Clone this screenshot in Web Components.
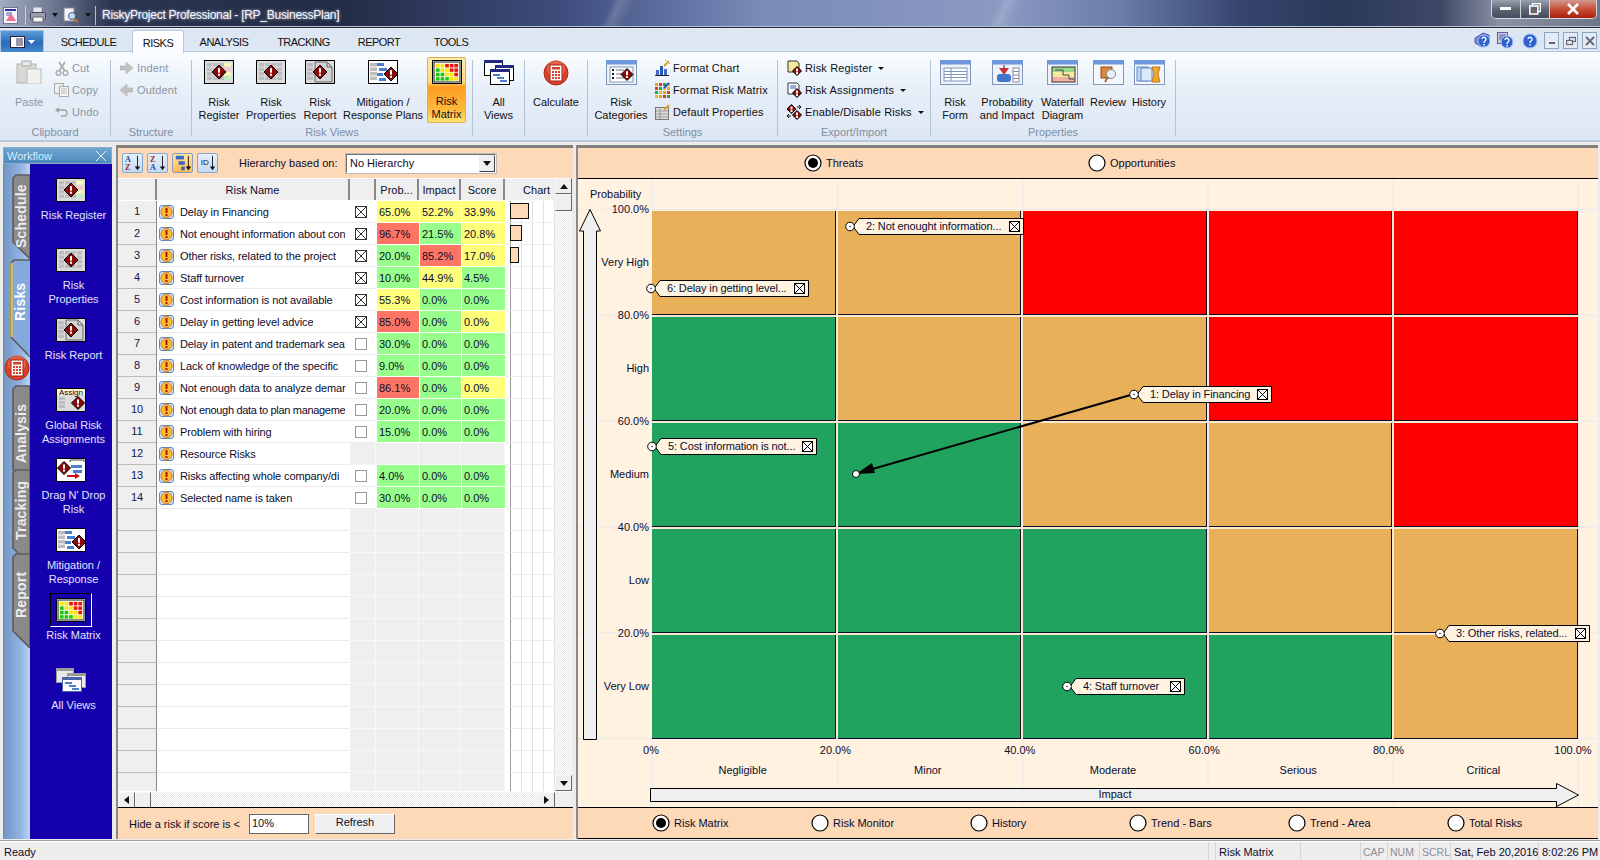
<!DOCTYPE html>
<html lang="en">
<head>
<meta charset="utf-8">
<title>RiskyProject Professional</title>
<style>
html,body{margin:0;height:100%;overflow:hidden;font:11px "Liberation Sans",Arial,sans-serif;color:#0c0c2c;background:#f0eded}
</style>
</head>
<body>
<rp-app></rp-app>
<script>
// Small helpers for the icon drawings
const dia=(x,y,r=7)=>`<path d="M${x} ${y-r}L${x+r} ${y}L${x} ${y+r}L${x-r} ${y}Z" fill="#8c0a0a" stroke="#000"/><rect x="${x-1}" y="${y-r*.55}" width="2" height="${r*.65}" fill="#fff"/><rect x="${x-1}" y="${y+r*.25}" width="2" height="2" fill="#fff"/>`;
const cells=(x,y,cols,rows,cw,ch,fill="#bdbdbd",gap=1)=>{
  let s="";
  for(let r=0;r<rows;r++)for(let c=0;c<cols;c++){
    const f=typeof fill==="function"?fill(r,c):fill;
    s+=`<rect x="${x+c*(cw+gap)}" y="${y+r*(ch+gap)}" width="${cw}" height="${ch}" fill="${f}"/>`;
  }
  return s;
};
const frame=(fill="#dcdcdc")=>`<rect x=".5" y=".5" width="29" height="23" fill="${fill}" stroke="#000"/>`;
const win=(inner="",fill="#fff")=>`<rect x=".5" y=".5" width="30" height="24" fill="${fill}" stroke="#7f96b8"/><rect x="0" y="0" width="31" height="4.5" fill="#6f97dc"/>${inner}`;
const matColor=(r,c)=>{const m=["yyrrr","gyyrr","ggyyr","gggyy"];return {y:"#f6e800",r:"#ee1010",g:"#14c814"}[m[r][c]];};
const help=(x,y)=>`<circle cx="${x}" cy="${y}" r="6" fill="#2e62d0" stroke="#9cc0f4"/><path d="M${x-2} ${y-2}a2 2 0 1 1 3 2q-1 .7-1 2" fill="none" stroke="#fff" stroke-width="1.4"/><rect x="${x-.7}" y="${y+3}" width="1.5" height="1.5" fill="#fff"/>`;
const ICONS={
  register:[30,24,frame()+cells(3,3,3,4,5,3.5)+cells(20,3,1,4,7,3.5,(r)=>["#f7f7c0","#f5c8c8","#f7f7c0","#c0eec0"][r])+dia(15,12)],
  properties:[30,24,frame()+cells(3,3,4,4,5,3.5)+dia(15,12)],
  report:[30,24,frame()+cells(2,3,1,4,6,3.5)+`<path d="M10 2h12l5 5v15H10z" fill="#d4d4d4" stroke="#666"/><path d="M22 2v5h5" fill="none" stroke="#666"/>`+dia(15,12)],
  mitigation:[30,24,frame("#fff")+cells(2,3,1,4,7,3.5)+`<rect x="9" y="3" width="7" height="3" fill="#4a7ed0"/><rect x="11" y="8" width="8" height="3" fill="#4a7ed0"/><rect x="9" y="13" width="6" height="3" fill="#4a7ed0"/><rect x="11" y="18" width="7" height="3" fill="#4a7ed0"/>`+dia(23,14)],
  matrix:[30,24,frame("#fff")+`<rect x="2" y="2" width="26" height="20" fill="#f7f2dc" stroke="#222"/>`+cells(4,4,5,4,3.6,3.4,matColor,1)],
  global:[30,24,frame("#dcdcdc")+`<rect x="1" y="1" width="28" height="6" fill="#fff6dc"/><text x="15" y="7" font-size="8" font-family="Liberation Sans" text-anchor="middle" fill="#000">Assign</text>`+cells(3,9,1,3,6,3)+dia(22,15,6.5)],
  dragdrop:[30,24,frame("#fff")+dia(8,10,6.5)+`<rect x="15" y="7" width="11" height="3" fill="#4a7ed0"/><rect x="17" y="12" width="9" height="3" fill="#4a7ed0"/><path d="M14 2h14M14 4V2M28 4V2" stroke="#444" fill="none"/><path d="M11 18h9" stroke="#d01010" stroke-width="2"/><path d="M19 15l5 3-5 3z" fill="#d01010"/>`],
  allviews:[30,26,`<rect x=".5" y=".5" width="18" height="15" fill="#fff" stroke="#000"/><rect x="0" y="0" width="19" height="3" fill="#222a80"/>`+`<rect x="11.5" y="5.5" width="18" height="15" fill="#fff" stroke="#000"/><rect x="11" y="5" width="19" height="3" fill="#222a80"/>`+`<rect x="6.5" y="9.5" width="19" height="15" fill="#fff" stroke="#000"/><rect x="6" y="9" width="20" height="3" fill="#222a80"/><rect x="9" y="14" width="7" height="2" fill="#4a7ed0"/><rect x="13" y="17" width="7" height="2" fill="#4a7ed0"/><rect x="16" y="20" width="7" height="2" fill="#4a7ed0"/>`],
  allviewsw:[30,24,`<rect x=".5" y=".5" width="17" height="14" fill="#e8e8e8" stroke="#999"/><rect x="0" y="0" width="18" height="3" fill="#9a9a9a"/><rect x="11.5" y="5.5" width="18" height="14" fill="#eee" stroke="#999"/><rect x="11" y="5" width="19" height="3" fill="#9a9a9a"/><rect x="6.5" y="9.5" width="19" height="14" fill="#fff" stroke="#4a66aa"/><rect x="6" y="9" width="20" height="3" fill="#4a66aa"/><rect x="9" y="14" width="7" height="2" fill="#4a7ed0"/><rect x="13" y="17" width="7" height="2" fill="#4a7ed0"/><rect x="16" y="20" width="7" height="2" fill="#4a7ed0"/>`],
  paste:[26,24,`<rect x="1" y="4" width="19" height="19" fill="#d8d8d4" stroke="#b4b4b0"/><rect x="6" y="1" width="9" height="5" fill="#e6e6e2" stroke="#aaa"/><rect x="11" y="9" width="14" height="15" fill="#f0f0ee" stroke="#bcbcbc"/>`],
  cut:[14,15,`<path d="M4 1l6 9M10 1L4 10" stroke="#a6a6a6" stroke-width="1.6" fill="none"/><circle cx="3.5" cy="12" r="2.4" fill="none" stroke="#a6a6a6" stroke-width="1.4"/><circle cx="10.5" cy="12" r="2.4" fill="none" stroke="#a6a6a6" stroke-width="1.4"/>`],
  copy:[15,14,`<rect x=".5" y=".5" width="9" height="10" fill="#eee" stroke="#aaa"/><rect x="5.5" y="3.5" width="9" height="10" fill="#f4f4f4" stroke="#aaa"/><path d="M7 6h6M7 8h6M7 10h6" stroke="#bbb"/>`],
  undo:[13,10,`<path d="M3 3h6a3 3 0 0 1 0 6H6" fill="none" stroke="#a0a0a0" stroke-width="1.3"/><path d="M4 0L0 3l4 3z" fill="#a0a0a0"/>`],
  indent:[13,12,`<path d="M0 4h6V0l7 6-7 6V8H0z" fill="#c2c2c2" stroke="#aaa" stroke-width=".5"/>`],
  outdent:[13,12,`<path d="M13 4H7V0L0 6l7 6V8h6z" fill="#c2c2c2" stroke="#aaa" stroke-width=".5"/>`],
  calc:[26,26,`<circle cx="13" cy="13" r="12" fill="#d8402a" stroke="#b02818"/><circle cx="13" cy="9" r="9" fill="#ee7a60" opacity=".55"/><rect x="7" y="5" width="12" height="16" fill="#fff" stroke="#a02010"/><rect x="9" y="7" width="8" height="2.5" fill="#d8402a"/>`+cells(9,11,3,3,2,2,"#d8402a")],
  fmtchart:[15,16,`<rect x="1" y="10" width="3" height="6" fill="#3a6cc8"/><rect x="5" y="6" width="3" height="10" fill="#2a56b0"/><rect x="9" y="9" width="3" height="7" fill="#3a6cc8"/><rect x="0" y="15" width="14" height="1" fill="#223"/><path d="M9 6l5-5" stroke="#e0a020" stroke-width="2"/><path d="M10 0l1 1M14 3l1 1" stroke="#888"/>`],
  fmtmatrix:[15,16,cells(0,1,4,4,3,3,(r,c)=>["#e8a020","#d04020","#30a040","#e0c020"][(r+c)%4])+`<path d="M9 6l5-5" stroke="#2a56b0" stroke-width="2"/>`],
  defprops:[15,16,`<rect x=".5" y="3.5" width="13" height="12" fill="#ddd" stroke="#777"/><path d="M1 7h12M1 10h12M1 13h12M5 4v11" stroke="#999"/><path d="M9 6l5-5" stroke="#e0a020" stroke-width="2"/>`],
  regsmall:[15,16,`<path d="M1 1h9l2 2v9H1z" fill="#f6e89a" stroke="#333"/>`+dia(10,11,4.5)],
  assignsmall:[15,16,`<path d="M1 1h9l2 2v9H1z" fill="#fff" stroke="#333"/><path d="M3 4h6M3 6h6" stroke="#2a56b0"/>`+dia(10,11,4.5)],
  enablesmall:[15,16,dia(4.5,5,4.5)+dia(10,11,4.5)+`<path d="M10 3h4M12 1l2 2-2 2M0 12h4M2 10l-2 2 2 2" stroke="#111" fill="none"/>`],
  categories:[31,25,win(`<rect x="4" y="7" width="23" height="15" fill="#fff" stroke="#7f96b8"/>`+cells(6,9,1,3,2,2,"#222",2)+`<path d="M10 10h8M10 14h8M10 18h8" stroke="#777"/>`+dia(21,14.5,6),"#eef3fb")],
  form:[31,25,win(`<rect x="4" y="8" width="23" height="13" fill="#fff" stroke="#7f96b8"/><path d="M4 11.5h23M4 14.5h23M4 17.5h23M11 8v13" stroke="#7f96b8"/>`,"#eef3fb")],
  prob:[31,25,win(`<path d="M7 8h10l-5 7z" fill="#d03030"/><path d="M12 5v4" stroke="#333"/><rect x="5" y="14" width="14" height="8" rx="3" fill="#3f78c8"/><rect x="21" y="8" width="6" height="14" fill="#fff" stroke="#889"/><path d="M21 11.5h6M21 15h6M21 18.5h6" stroke="#889"/>`,"#eef3fb")],
  waterfall:[31,25,win(`<rect x="5" y="7" width="23" height="5" fill="#9ad88a"/><rect x="5" y="12" width="23" height="5" fill="#f6eaa0"/><rect x="5" y="17" width="23" height="5" fill="#f4b0a8"/><path d="M8 10h8v5h6v4h5" fill="none" stroke="#444"/><rect x="5" y="7" width="23" height="15" fill="none" stroke="#333"/>`,"#eef3fb")],
  review:[31,25,win(`<rect x="8" y="7" width="11" height="11" fill="#d88a3a" stroke="#8a5020"/><circle cx="18" cy="14" r="4.5" fill="#e8f0fa" stroke="#888"/><path d="M15 17l-3 5" stroke="#a87030" stroke-width="2"/>`,"#f4f7fc")],
  history:[31,25,win(`<rect x="3" y="7" width="11" height="14" fill="#bcd6f6" stroke="#5a88c8"/><rect x="7" y="8" width="11" height="13" fill="#dce9fa" stroke="#5a88c8"/><path d="M18 7h8l-2 7 2 8h-8l2-8z" fill="#f0a830" stroke="#c07a10"/>`,"#f4f7fc")],
  risk:[15,14,`<rect x=".5" y=".5" width="14" height="13" rx="2.5" fill="#cfe0f5" stroke="#5f84c4"/><circle cx="7.5" cy="7" r="5.6" fill="#f8c030" stroke="#e07810"/><rect x="6.5" y="3" width="2" height="5" fill="#b01010"/><rect x="6.5" y="9" width="2" height="2" fill="#b01010"/>`],
  helpbook:[16,17,`<path d="M1 6l8-5 6 2v8l-7 4-7-4z" fill="#8a80d8" stroke="#6058b0"/>`+help(10,9)],
  helpdoc:[16,17,`<rect x=".5" y=".5" width="10" height="11" fill="#ccd" stroke="#6058b0"/><path d="M2 3h7M2 5h7M2 7h5" stroke="#6058b0"/>`+help(10,10)],
  helpbig:[16,16,help(8,8).replace('r="6"','r="7"')],
  printer:[16,16,`<rect x="3" y="0" width="9" height="6" fill="#e8e8f0" stroke="#889"/><rect x=".5" y="5.5" width="15" height="7" rx="1" fill="#9aa0b0" stroke="#445"/><rect x="3" y="10" width="10" height="5" fill="#f4f4f8" stroke="#667"/>`],
  preview:[16,16,`<rect x="1" y="1" width="10" height="13" fill="#eef2fa" stroke="#889"/><circle cx="9" cy="9" r="3.5" fill="#bfe0fa" stroke="#557"/><path d="M11 12l4 3" stroke="#c07a10" stroke-width="2"/>`],
  appicon:[15,17,`<rect x=".5" y=".5" width="14" height="16" fill="#f4f4ff" stroke="#778"/><path d="M2 3h11" stroke="#3030a0" stroke-width="2"/><path d="M8 6l5 8H3z" fill="#f07090"/><path d="M3 6h6M3 8h4" stroke="#5060c0"/>`],
  az:[20,20,`<text x="1" y="9" font-size="9" font-weight="700" font-family="Liberation Serif" fill="#2a4aa0">A</text><text x="1" y="18" font-size="9" font-weight="700" font-family="Liberation Serif" fill="#a02a2a">Z</text><path d="M15 2v14" stroke="#111"/><path d="M12 14l3 4 3-4z" fill="#111"/>`],
  za:[20,20,`<text x="1" y="9" font-size="9" font-weight="700" font-family="Liberation Serif" fill="#a02a2a">Z</text><text x="1" y="18" font-size="9" font-weight="700" font-family="Liberation Serif" fill="#2a4aa0">A</text><path d="M15 2v14" stroke="#111"/><path d="M12 14l3 4 3-4z" fill="#111"/>`],
  hier:[20,20,`<rect x="2" y="2" width="9" height="4" fill="#3a66c8"/><rect x="5" y="8" width="7" height="4" fill="#3a66c8"/><rect x="8" y="14" width="4" height="4" fill="#3a66c8"/><path d="M16 2v14" stroke="#111"/><path d="M13 14l3 4 3-4z" fill="#111"/>`],
  idsort:[20,20,`<text x="2" y="12" font-size="9" font-family="Liberation Sans" fill="#111">ID</text><path d="M15 2v14" stroke="#111"/><path d="M12 14l3 4 3-4z" fill="#111"/>`]
};

// Base class: shadow root filled with markup once
class RpEl extends HTMLElement {
  constructor(){ super(); this.attachShadow({mode:"open"}); }
  connectedCallback(){ if(!this.done){ this.shadowRoot.innerHTML=this.render(); this.done=true; } }
}

class RpIcon extends RpEl {
  render(){
    const [w,h,body]=ICONS[this.getAttribute("name")];
    return `<style>:host{display:inline-flex;flex:none;line-height:0}</style><svg xmlns="http://www.w3.org/2000/svg" width="${w}" height="${h}" viewBox="0 0 ${w} ${h}">${body}</svg>`;
  }
}
customElements.define("rp-icon",RpIcon);

class RpTitlebar extends RpEl {
  render(){ return `<style>
  :host{display:flex;align-items:center;height:28px;flex:none;box-sizing:border-box;position:relative;padding-top:3px;
    background:linear-gradient(115deg,transparent 0 38%,rgba(255,255,255,.16) 38.5%,transparent 39.5%,transparent 62%,rgba(255,255,255,.14) 62.5%,transparent 63.5%),
    linear-gradient(90deg,#a2acc0 0,#717c95 50px,#2c3550 110px,#232c45 340px,#3d4c7c 560px,#7a8bba 760px,#8b9ac2 1000px,#6c7cab 1120px,#35456e 1240px,#2b3858 1340px,#3d4866 1440px,#8a92a4 1500px,#6d7688 1600px);
    border-bottom:1px solid #1c2438;box-shadow:inset 0 -1px 0 #b8c4d8}
  .q{display:flex;align-items:center;margin-left:3px}
  .sep{width:1px;height:19px;background:#d8dce4;opacity:.8}
  .dd{width:0;height:0;border:3px solid transparent;border-top:4px solid #111;border-bottom:0;margin:0}
  .title{margin-left:6px;color:#f6f8ff;font-size:12px;letter-spacing:-.27px;white-space:nowrap;text-shadow:0 0 3px #c8d0e4}
  .btns{position:absolute;right:3px;top:0;display:flex;height:18px;border:1px solid #d4d8e0;border-top:0;border-radius:0 0 5px 5px;overflow:hidden}
  .btns div{display:flex;align-items:center;justify-content:center;width:28px;background:linear-gradient(#9aa1ae,#5b6373 55%,#454c5c);border-right:1px solid #d0d4dc}
  .btns .x{width:46px;background:linear-gradient(#d09a90,#c84830 55%,#a82010);border:0}
  </style>
  <div class="q"><rp-icon name="appicon"></rp-icon></div>
  <div class="sep" style="margin-left:7px"></div>
  <rp-icon name="printer" style="margin-left:4px"></rp-icon>
  <div class="dd" style="margin-left:6px"></div>
  <rp-icon name="preview" style="margin-left:5px"></rp-icon>
  <div class="dd" style="margin-left:6px"></div>
  <div class="sep" style="margin-left:4px"></div>
  <div class="title">RiskyProject Professional - [RP_BusinessPlan]</div>
  <div class="btns">
    <div><svg width="12" height="4"><rect width="11" height="3" fill="#fff"/></svg></div>
    <div><svg width="12" height="12" viewBox="0 0 12 12"><rect x="3.5" y=".5" width="8" height="8" fill="none" stroke="#fff" stroke-width="1.5"/><rect x=".8" y="3" width="8" height="8" fill="#666" stroke="#fff" stroke-width="1.5"/></svg></div>
    <div class="x"><svg width="14" height="12" viewBox="0 0 14 12"><path d="M2 1l10 10M12 1L2 11" stroke="#fff" stroke-width="2.6"/></svg></div>
  </div>`; }
}
customElements.define("rp-titlebar",RpTitlebar);

class RpMenubar extends RpEl {
  render(){
    const tabs=[["SCHEDULE",87],["RISKS",52,1],["ANALYSIS",80],["TRACKING",79],["REPORT",72],["TOOLS",72]];
    return `<style>
    :host{display:flex;height:23px;flex:none;background:#dde7f3;box-sizing:border-box;border-bottom:1px solid #b6c8de;margin-top:1px;position:relative}
    .menu{width:44px;margin-top:1px;height:22px;background:linear-gradient(#5d9bd8,#2a6cb6 55%,#4688cc);display:flex;align-items:center;justify-content:center;gap:3px;margin-right:1px;box-sizing:border-box;border:1px solid #a8c4e4;border-bottom:0}
    .t{box-sizing:border-box;display:flex;align-items:center;justify-content:center;font-size:11px;letter-spacing:-.52px;color:#111;padding-top:3px}
    .on{background:linear-gradient(#fff,#fafcff);border:1px solid #b6c8de;border-bottom:0;border-radius:3px 3px 0 0;margin-top:1px;height:23px;padding-top:1px}
    .right{position:absolute;right:3px;top:3px;display:flex;align-items:center}
    .b{width:15px;height:17px;border:1px solid #8ea4bc;background:#e2ebf6;display:flex;align-items:center;justify-content:center;box-sizing:border-box}
    </style>
    <div class="menu"><svg width="15" height="12" viewBox="0 0 15 12"><rect x=".5" y=".5" width="14" height="11" fill="#fff" stroke="#224"/><path d="M6 3h7M6 5h7M6 7h7M6 9h7" stroke="#335"/></svg><svg width="7" height="4"><path d="M0 0h7L3.5 4z" fill="#fff"/></svg></div>
    ${tabs.map(([n,w,on])=>`<div class="t${on?" on":""}" style="width:${w}px">${n}</div>`).join("")}
    <div class="right">
      <rp-icon name="helpbook" style="margin-right:7px"></rp-icon>
      <rp-icon name="helpdoc" style="margin-right:9px"></rp-icon>
      <rp-icon name="helpbig" style="margin-right:6px"></rp-icon>
      <div class="b" style="margin-right:4px"><svg width="8" height="9"><rect x="1" y="6" width="6" height="2" fill="#667"/></svg></div>
      <div class="b" style="margin-right:4px"><svg width="10" height="10" viewBox="0 0 10 10"><rect x="3.5" y="1.5" width="6" height="4" fill="none" stroke="#667" stroke-width="1.2"/><rect x=".5" y="4.5" width="6" height="4" fill="#e2ebf6" stroke="#667" stroke-width="1.2"/></svg></div>
      <div class="b"><svg width="10" height="10" viewBox="0 0 10 10"><path d="M1 1l8 8M9 1L1 9" stroke="#667" stroke-width="1.8"/></svg></div>
    </div>`;
  }
}
customElements.define("rp-menubar",RpMenubar);

// Large ribbon button: icon above a two-line label
class RpBig extends RpEl {
  render(){
    const st=this.hasAttribute("active"), dis=this.hasAttribute("disabled");
    return `<style>
    :host{display:flex;flex-direction:column;align-items:center;flex:none;box-sizing:border-box;width:${this.getAttribute("w")||50}px;height:66px;margin-top:5px;padding-top:3px;text-align:center;line-height:13px;color:${dis?"#8a96a6":"#111"};white-space:nowrap;
      ${st?"background:linear-gradient(#ffeeb0,#ffd878 38%,#ff9c22 45%,#ffb83c 80%,#ffe272);border:1px solid #dcb050;border-radius:2px;padding-top:2px;":""}}
    .i{height:24px;display:flex;align-items:flex-start;justify-content:center}
    .l{margin-top:${st?11:12}px}
    </style><div class="i"><slot name="icon"></slot></div><div class="l"><slot></slot></div>`;
  }
}
customElements.define("rp-big",RpBig);

class RpSmall extends RpEl {
  render(){
    const dis=this.hasAttribute("disabled"), dd=this.hasAttribute("dd");
    return `<style>
    :host{display:flex;align-items:center;height:22px;white-space:nowrap;letter-spacing:.14px;color:${dis?"#8a96a6":"#111"}}
    .i{width:15px;margin-right:3px;display:flex;justify-content:center}
    .d{margin-left:6px;width:0;height:0;border:3px solid transparent;border-top:3px solid #111;border-bottom:0}
    </style><div class="i"><slot name="icon"></slot></div><slot></slot>${dd?'<div class="d"></div>':""}`;
  }
}
customElements.define("rp-small",RpSmall);

class RpGroup extends RpEl {
  render(){
    const w=this.getAttribute("w"), pad=this.getAttribute("pad")||0, center=this.hasAttribute("center");
    return `<style>
    :host{display:flex;flex-direction:column;flex:none;width:${w}px;height:89px;box-sizing:border-box}
    .c{display:flex;height:73px;padding-left:${pad}px;${center?"justify-content:center;":""}}
    .n{height:14px;line-height:14px;text-align:center;color:#7e8ea4}
    </style><div class="c"><slot></slot></div><div class="n">${this.getAttribute("label")||""}</div>`;
  }
}
customElements.define("rp-group",RpGroup);

class RpRibbon extends RpEl {
  render(){ const sep='<div class="sep"></div>'; return `<style>
  :host{display:flex;height:90px;flex:none;box-sizing:border-box;background:linear-gradient(#fafdff,#e6eef8 45%,#dde7f4);border-bottom:2px solid #b9c8dc}
  .sep{width:1px;height:76px;margin-top:8px;background:#b4c2d6;flex:none}
  .col{display:flex;flex-direction:column;padding-top:5px}
  </style>
  <rp-group w="110" pad="8" label="Clipboard">
    <rp-big w="42" disabled><rp-icon slot="icon" name="paste"></rp-icon>Paste</rp-big>
    <div class="col" style="margin-left:4px;padding-top:5px">
      <rp-small disabled><rp-icon slot="icon" name="cut"></rp-icon>Cut</rp-small>
      <rp-small disabled><rp-icon slot="icon" name="copy"></rp-icon>Copy</rp-small>
      <rp-small disabled><rp-icon slot="icon" name="undo"></rp-icon>Undo</rp-small>
    </div>
  </rp-group>${sep}
  <rp-group w="80" pad="8" label="Structure">
    <div class="col">
      <rp-small disabled><rp-icon slot="icon" name="indent"></rp-icon>Indent</rp-small>
      <rp-small disabled><rp-icon slot="icon" name="outdent"></rp-icon>Outdent</rp-small>
    </div>
  </rp-group>${sep}
  <rp-group w="280" pad="1" label="Risk Views">
    <rp-big w="52"><rp-icon slot="icon" name="register"></rp-icon>Risk<br>Register</rp-big>
    <rp-big w="52"><rp-icon slot="icon" name="properties"></rp-icon>Risk<br>Properties</rp-big>
    <rp-big w="46"><rp-icon slot="icon" name="report"></rp-icon>Risk<br>Report</rp-big>
    <rp-big w="80"><rp-icon slot="icon" name="mitigation"></rp-icon>Mitigation /<br>Response Plans</rp-big>
    <rp-big w="39" active style="margin-left:4px"><rp-icon slot="icon" name="matrix"></rp-icon>Risk<br>Matrix</rp-big>
  </rp-group>${sep}
  <rp-group w="51" center><rp-big w="50"><rp-icon slot="icon" name="allviews"></rp-icon>All<br>Views</rp-big></rp-group>${sep}
  <rp-group w="62" center><rp-big w="60"><rp-icon slot="icon" name="calc"></rp-icon>Calculate</rp-big></rp-group>${sep}
  <rp-group w="189" pad="5" label="Settings">
    <rp-big w="56"><rp-icon slot="icon" name="categories"></rp-icon>Risk<br>Categories</rp-big>
    <div class="col" style="margin-left:6px">
      <rp-small><rp-icon slot="icon" name="fmtchart"></rp-icon>Format Chart</rp-small>
      <rp-small><rp-icon slot="icon" name="fmtmatrix"></rp-icon>Format Risk Matrix</rp-small>
      <rp-small><rp-icon slot="icon" name="defprops"></rp-icon>Default Properties</rp-small>
    </div>
  </rp-group>${sep}
  <rp-group w="152" pad="9" label="Export/Import">
    <div class="col">
      <rp-small dd><rp-icon slot="icon" name="regsmall"></rp-icon>Risk Register</rp-small>
      <rp-small dd><rp-icon slot="icon" name="assignsmall"></rp-icon>Risk Assignments</rp-small>
      <rp-small dd><rp-icon slot="icon" name="enablesmall"></rp-icon>Enable/Disable Risks</rp-small>
    </div>
  </rp-group>${sep}
  <rp-group w="244" label="Properties">
    <rp-big w="48"><rp-icon slot="icon" name="form"></rp-icon>Risk<br>Form</rp-big>
    <rp-big w="56"><rp-icon slot="icon" name="prob"></rp-icon>Probability<br>and Impact</rp-big>
    <rp-big w="55"><rp-icon slot="icon" name="waterfall"></rp-icon>Waterfall<br>Diagram</rp-big>
    <rp-big w="36"><rp-icon slot="icon" name="review"></rp-icon>Review</rp-big>
    <rp-big w="46"><rp-icon slot="icon" name="history"></rp-icon>History</rp-big>
  </rp-group>${sep}`; }
}
customElements.define("rp-ribbon",RpRibbon);

// Vertical tab of the workflow strip
class RpWfTab extends RpEl {
  render(){
    const h=+this.getAttribute("h"), on=this.hasAttribute("on"), w=on?20:18, s=on?20:17;
    return `<style>
    :host{display:flex;position:relative;flex:none;width:${w}px;height:${h}px;align-self:flex-end;margin-top:${this.getAttribute("mt")||0}px}
    svg{position:absolute;inset:0}
    .t{position:relative;writing-mode:vertical-rl;transform:rotate(180deg);font:700 14px "Liberation Sans",sans-serif;color:${on?"#fff":"#ececec"};
       width:100%;height:${this.getAttribute("th")||h}px;display:flex;align-items:center;justify-content:center;margin-top:${this.getAttribute("tt")||0}px;letter-spacing:.2px}
    </style>
    <svg width="${w}" height="${h}" viewBox="0 0 ${w} ${h}">
      <path d="M1 4L4 1H${w}V${h}L1 ${h-s}Z" fill="${on?"#86a9dc":"#8a8a8a"}" stroke="#5c5c5c" stroke-width="1.6"/>
      ${on?`<path d="M1.5 4V${h-s}" stroke="#f2c218" stroke-width="2"/><path d="M${w-.5} 2V${h-1}" stroke="#86a9dc" stroke-width="2"/>`:""}
    </svg>
    <div class="t"><slot></slot></div>`;
  }
}
customElements.define("rp-wf-tab",RpWfTab);

class RpWfItem extends RpEl {
  render(){
    const sel=this.hasAttribute("selected");
    return `<style>
    :host{display:flex;flex-direction:column;align-items:center;height:70px;flex:none;color:#e2e4ff;text-align:center;line-height:14px}
    .i{height:24px;display:flex;${sel?"padding:4px 5px 4px 5px;margin:-5px -6px -5px -6px;border:1px solid;border-color:#000 #fff #fff #000;":""}}
    .l{margin-top:6px;margin-left:5px}
    </style><div class="i"><slot name="icon"></slot></div><div class="l"><slot></slot></div>`;
  }
}
customElements.define("rp-wf-item",RpWfItem);

class RpWorkflow extends RpEl {
  render(){ return `<style>
  :host{display:flex;flex-direction:column;width:113px;flex:none;box-sizing:border-box;padding:5px 1px 0 3px;background:#ececec}
  .hd{height:17px;flex:none;width:109px;box-sizing:border-box;display:flex;align-items:center;justify-content:space-between;padding:0 5px 0 3px;color:#d4ecff;background:linear-gradient(#6ea6d2,#4e8aba);border:1px solid #88aac8;font-size:11px}
  .body{flex:1;display:flex;min-height:0}
  .strip{width:27px;box-sizing:border-box;display:flex;flex-direction:column;padding-top:10px;background:linear-gradient(90deg,#7295c4,#92b4e2 65%,#bcd6f4);border-left:1px solid #888}
  .calc{flex:none;margin:-2px 0 4px 0;height:26px;line-height:0}
  .list{width:82px;background:#1500ae;display:flex;flex-direction:column;padding-top:14px;box-sizing:border-box}
  </style>
  <div class="hd">Workflow<svg width="10" height="10" viewBox="0 0 10 10"><path d="M0 0l10 10M10 0L0 10" stroke="#e8f4ff"/></svg></div>
  <div class="body">
    <div class="strip">
      <rp-wf-tab h="85">Schedule</rp-wf-tab>
      <rp-wf-tab h="98" th="86" on>Risks</rp-wf-tab>
      <div class="calc"><rp-icon name="calc"></rp-icon></div>
      <rp-wf-tab h="102" th="97">Analysis</rp-wf-tab>
      <rp-wf-tab h="96" mt="-18" th="82" tt="0">Tracking</rp-wf-tab>
      <rp-wf-tab h="95" mt="-12" th="80" tt="2">Report</rp-wf-tab>
    </div>
    <div class="list">
      <rp-wf-item><rp-icon slot="icon" name="register"></rp-icon>Risk Register</rp-wf-item>
      <rp-wf-item><rp-icon slot="icon" name="properties"></rp-icon>Risk<br>Properties</rp-wf-item>
      <rp-wf-item><rp-icon slot="icon" name="report"></rp-icon>Risk Report</rp-wf-item>
      <rp-wf-item><rp-icon slot="icon" name="global"></rp-icon>Global Risk<br>Assignments</rp-wf-item>
      <rp-wf-item><rp-icon slot="icon" name="dragdrop"></rp-icon>Drag N' Drop<br>Risk</rp-wf-item>
      <rp-wf-item><rp-icon slot="icon" name="mitigation"></rp-icon>Mitigation /<br>Response</rp-wf-item>
      <rp-wf-item selected><rp-icon slot="icon" name="matrix"></rp-icon>Risk Matrix</rp-wf-item>
      <rp-wf-item><rp-icon slot="icon" name="allviewsw"></rp-icon>All Views</rp-wf-item>
    </div>
  </div>`; }
}
customElements.define("rp-workflow",RpWorkflow);

const RISKS=[
 ["Delay in Financing",1,"y65.0%","y52.2%","y33.9%",19],
 ["Not enought information about con",1,"r96.7%","g21.5%","y20.8%",12],
 ["Other risks, related to the project",1,"g20.0%","r85.2%","y17.0%",9],
 ["Staff turnover",1,"g10.0%","y44.9%","g4.5%",0],
 ["Cost information is not available",1,"y55.3%","g0.0%","g0.0%",0],
 ["Delay in getting level advice",1,"r85.0%","g0.0%","y0.0%",0],
 ["Delay in patent and trademark sea",0,"g30.0%","g0.0%","g0.0%",0],
 ["Lack of knowledge of the specific",0,"g9.0%","g0.0%","g0.0%",0],
 ["Not enough data to analyze demar",0,"r86.1%","g0.0%","y0.0%",0],
 ["Not enough data to plan manageme",0,"g20.0%","g0.0%","g0.0%",0],
 ["Problem with hiring",0,"g15.0%","g0.0%","g0.0%",0],
 ["Resource Risks",null],
 ["Risks affecting whole company/di",0,"g4.0%","g0.0%","g0.0%",0],
 ["Selected name is taken",0,"g30.0%","g0.0%","g0.0%",0]
];

class RpRiskGrid extends RpEl {
  render(){
    const tb=(n,on)=>`<div class="tb${on?" hot":""}"><rp-icon name="${n}"></rp-icon></div>`;
    const VC={y:"vy",g:"vg",r:"vr"};
    let rows="";
    for(let i=0;i<27;i++){
      const r=RISKS[i];
      rows+=`<div class="num">${r?i+1:""}</div>`;
      if(r){
        // row 10 is the longest name: squeeze it a little so that it fits the column
        rows+=`<div class="name"><rp-icon name="risk"></rp-icon><span${i===9?' style="letter-spacing:-.32px"':""}>${r[0]}</span></div>`;
        if(r[1]===null){ rows+=`<div class="blank"></div><div class="blank"></div><div class="blank"></div><div class="blank"></div>`; }
        else{
          rows+=`<div class="chk"><svg width="12" height="12" viewBox="0 0 12 12"><rect x=".5" y=".5" width="11" height="11" fill="#fff" stroke="${r[1]?"#333":"#999"}"/>${r[1]?'<path d="M1 1l10 10M11 1L1 11" stroke="#333"/>':""}</svg></div>`;
          for(const v of r.slice(2,5)) rows+=`<div class="v ${VC[v[0]]}">${v.slice(1)}</div>`;
        }
        rows+=`<div class="ch">${r[5]?`<div class="bar" style="width:${r[5]}px"></div>`:""}</div>`;
      } else {
        rows+=`<div class="name"></div><div class="blank"></div><div class="blank"></div><div class="blank"></div><div class="blank"></div><div class="ch"></div>`;
      }
    }
    return `<style>
    :host{display:flex;flex-direction:column;width:457px;flex:none;box-sizing:border-box;border-left:2px solid #8a8a8a;border-top:3px solid #808080}
    .top{height:30px;flex:none;background:#fed9b8;display:flex;align-items:center;padding-left:4px;box-sizing:border-box}
    .tb{width:21px;height:20px;border:1px solid #84a8cc;border-radius:2px;background:linear-gradient(#e6f0fa,#c4dbf2);margin-right:4px;display:flex;align-items:center;justify-content:center;box-sizing:border-box}
    .tb rp-icon{transform:scale(.9)}
    .hot{background:linear-gradient(#ffe6a8,#ffb84a);border-color:#88a0c0}
    .lbl{margin-left:17px;width:106px}
    .combo{width:152px;height:21px;background:#fff;box-sizing:border-box;border:2px solid;border-color:#707070 #fff #fff #707070;outline:1px solid #bbb;outline-offset:-1px;display:flex;align-items:center;justify-content:space-between;padding-left:3px;font-size:11px}
    .combo i{width:16px;height:17px;background:#efefef;border:1px solid;border-color:#eee #444 #444 #eee;box-sizing:border-box;display:flex;align-items:center;justify-content:center}
    .main{flex:1;display:flex;min-height:0}
    .tbl{width:437px;overflow:hidden;background:#fff;border-top:1px solid #fff}
    .g{display:grid;grid-template-columns:39px 193px 26px 43px 42px 44px 50px;grid-auto-rows:22px}
    .h{background:#efefef;height:21px;display:flex;align-items:center;justify-content:center;border-right:2px solid #8a8a8a;box-sizing:border-box}
    .h.last{border-right:0;justify-content:flex-end;padding-right:5px}
    .num{background:#efefef;border-right:1px solid #8a8a8a;box-sizing:border-box;display:flex;align-items:center;justify-content:center;padding-bottom:2px;color:#141450;border-bottom:1px solid #bbb}
    .name{display:flex;align-items:center;padding-left:2px;gap:6px;overflow:hidden;white-space:nowrap;box-sizing:border-box;border-bottom:1px solid #ececec;padding-right:3px;letter-spacing:-.1px}
    .name span{overflow:hidden}
    .chk{display:flex;align-items:center;justify-content:center;border-bottom:1px solid #ececec;padding-right:4px;box-sizing:border-box}
    .v{display:flex;align-items:center;padding-left:2px;box-sizing:border-box;border-left:1px solid #fff;border-bottom:1px solid #fff}
    .vy{background:#ffff7c}.vr{background:#ff7565}.vg{background:#98ff8c}
    .blank{background:#efefef;border-right:1px solid #f8f8f8;border-bottom:1px solid #f8f8f8;box-sizing:border-box}
    .ch{background:linear-gradient(90deg,#fff 5px,#999 5px,#999 6px,#fff 6px,#fff 16px,#e2e2e2 16px,#e2e2e2 17px,#fff 17px,#fff 27px,#e2e2e2 27px,#e2e2e2 28px,#fff 28px,#fff 38px,#e2e2e2 38px,#e2e2e2 39px,#fff 39px,#fff 49px,#e2e2e2 49px,#e2e2e2 50px,#fff 50px);border-bottom:1px solid #ececec;box-sizing:border-box;padding:2px 0 0 5px}
    .bar{height:16px;background:#fed9b8;border:1px solid #111;box-sizing:border-box}
    .vs{width:17px;display:flex;flex-direction:column;background:repeating-conic-gradient(#e8e8e8 0 25%,#fff 0 50%) 0 0/2px 2px}
    .sb{height:16px;background:#efefef;border:1px solid;border-color:#f8f8f8 #666 #666 #f8f8f8;box-sizing:border-box;display:flex;align-items:center;justify-content:center;flex:none}
    .tri{width:0;height:0;border:4px solid transparent}
    .hs{height:16px;flex:none;display:flex;background:repeating-conic-gradient(#e8e8e8 0 25%,#fff 0 50%) 0 0/2px 2px;border-top:1px solid #fff;box-sizing:border-box}
    .hs .sb{width:17px}
    .foot{height:32px;flex:none;background:#fed9b8;border-top:1px solid #000;box-sizing:border-box;display:flex;align-items:center;padding-left:11px}
    .foot .in{width:60px;height:20px;margin-left:9px;box-sizing:border-box;background:#fff;border:1px solid #666;padding-left:2px;line-height:16px;font-size:11px}
    .foot .rf{width:80px;height:20px;margin-left:6px;box-sizing:border-box;background:#efefef;border:1px solid;border-color:#fff #666 #666 #fff;display:flex;align-items:center;justify-content:center;padding-bottom:3px}
    </style>
    <div class="top">${tb("az")}${tb("za")}${tb("hier",1)}${tb("idsort")}
      <div class="lbl">Hierarchy based on:</div>
      <div class="combo">No Hierarchy<i><span class="tri" style="border-top:5px solid #111;border-bottom:0"></span></i></div>
    </div>
    <div class="main">
      <div class="tbl">
        <div class="g">
          <div class="h"></div><div class="h">Risk Name</div><div class="h"></div><div class="h">Prob...</div><div class="h">Impact</div><div class="h">Score</div><div class="h last">Chart</div>
          ${rows}
        </div>
      </div>
      <div class="vs">
        <div class="sb"><span class="tri" style="border-bottom:5px solid #111;border-top:0"></span></div>
        <div class="sb" style="height:17px"></div>
        <div style="flex:1"></div>
        <div class="sb"><span class="tri" style="border-top:5px solid #111;border-bottom:0"></span></div>
      </div>
    </div>
    <div class="hs">
      <div class="sb"><span class="tri" style="border-right:5px solid #111;border-left:0"></span></div>
      <div class="sb" style="width:16px"></div>
      <div style="flex:1"></div>
      <div class="sb"><span class="tri" style="border-left:5px solid #111;border-right:0"></span></div>
      <div style="width:18px;background:#efefef"></div>
    </div>
    <div class="foot">Hide a risk if score is &lt;<div class="in">10%</div><div class="rf">Refresh</div></div>`;
  }
}
customElements.define("rp-risk-grid",RpRiskGrid);

class RpRadio extends RpEl {
  render(){
    const on=this.hasAttribute("checked");
    return `<style>
    :host{display:flex;align-items:center;flex:none;width:${this.getAttribute("w")}px;gap:4px;white-space:nowrap}
    svg{flex:none}
    </style><svg width="18" height="18" viewBox="0 0 18 18"><circle cx="9" cy="9" r="8" fill="#fff" stroke="#000" stroke-width="1.2"/>${on?'<circle cx="9" cy="9" r="5" fill="#000"/>':""}</svg><slot></slot>`;
  }
}
customElements.define("rp-radio",RpRadio);

// Risk label on the matrix, placed at the point it marks
class RpPin extends RpEl {
  render(){
    const dot=+this.getAttribute("dot"), y=+this.getAttribute("y"), end=+this.getAttribute("end");
    const w=end-dot+6;
    this.style.left=(dot-6-578)+"px";
    this.style.top=(y-8-179)+"px";
    return `<style>
    :host{position:absolute;display:block;width:${w}px;height:17px;z-index:2}
    svg{position:absolute;left:0;top:0}
    .t{position:absolute;left:22px;right:17px;top:0;height:17px;line-height:17px;white-space:nowrap;overflow:hidden;letter-spacing:-.12px}
    </style>
    <svg width="${w}" height="17" viewBox="0 0 ${w} 17">
      <path d="M9 8.5L15 .5H${w-.5}V16.5H15Z" fill="#fff3e2" stroke="#000"/>
      <circle cx="6" cy="8.5" r="4.3" fill="#fff" stroke="#000"/><circle cx="6" cy="8.5" r=".7" fill="#000"/>
      <rect x="${w-14.5}" y="3.5" width="10" height="10" fill="#fff" stroke="#000"/><path d="M${w-14.5} 3.5l10 10M${w-4.5} 3.5l-10 10" stroke="#000"/>
    </svg><div class="t"><slot></slot></div>`;
  }
}
customElements.define("rp-pin",RpPin);

class RpMatrix extends RpEl {
  render(){
    const M=["OORRR","GOORR","GGOOR","GGGOO","GGGGO"];
    const cellsHtml=M.join("").split("").map(c=>`<div class="${c}"></div>`).join("");
    const ylab=["100.0%","Very High","80.0%","High","60.0%","Medium","40.0%","Low","20.0%","Very Low"," "];
    const bottom=["Risk Matrix","Risk Monitor","History","Trend - Bars","Trend - Area","Total Risks"];
    return `<style>
    :host{display:flex;flex-direction:column;flex:1;min-width:0;margin-right:2px;box-sizing:border-box;border-left:2px solid #8a8a8a;border-top:3px solid #808080}
    .top{height:31px;flex:none;box-sizing:border-box;background:#fed9b8;border-bottom:1px solid #000;display:flex;align-items:center;padding-left:226px}
    .chart{position:relative;height:628px;flex:none;overflow:hidden;background:
      linear-gradient(90deg,#ebe9ec 1px,transparent 1px) 74px 0/185.2px 100%,
      linear-gradient(#ebe9ec 1px,transparent 1px) 0 30px/100% 105.8px,#fff2e0}
    .pb{height:23px;padding-left:12px;box-sizing:border-box;line-height:30px}
    .mid{display:flex;height:545px}
    .ya{width:22px;flex:none;margin-top:7px;margin-left:1px}
    .yl{width:48px;height:544px;flex:none;display:flex;flex-direction:column;justify-content:space-between;align-items:flex-end;white-space:nowrap;margin-right:3px}
    .yl div{height:14px;line-height:14px}
    .m{width:926px;height:528px;margin-top:9px;display:grid;grid-template-columns:repeat(5,1fr);grid-template-rows:repeat(5,1fr);gap:2px;background:#fbead0}
    .m div{box-sizing:border-box;border-right:1px solid;border-bottom:1px solid}
    .O{background:#e9b05a;border-color:#c68a2c}.R{background:#fe0000;border-color:#d42020}.G{background:#21a35f;border-color:#178048}
    .tk{display:flex;justify-content:space-between;width:962px;margin:-4px 0 0 53px;height:14px;line-height:14px}
    .tk div{width:40px;text-align:center}
    .nm{display:grid;grid-template-columns:repeat(5,1fr);width:926px;margin:6px 0 0 72px;text-align:center;height:14px;line-height:14px}
    .ia{display:block;margin:6px 0 0 72px;position:relative}
    .it{position:absolute;left:74px;width:926px;top:${783-179+4}px;text-align:center;height:14px;line-height:15px}
    .link{position:absolute;left:0;top:0;pointer-events:none;z-index:1}
    .bot{height:32px;flex:none;box-sizing:border-box;background:#fed9b8;border-top:1px solid #000;border-bottom:1px solid #000;display:flex;align-items:center;padding-left:74px}
    </style>
    <div class="top"><rp-radio w="284" checked>Threats</rp-radio><rp-radio w="200">Opportunities</rp-radio></div>
    <div class="chart">
      <div class="pb">Probability</div>
      <div class="mid">
        <svg class="ya" width="22" height="531" viewBox="0 0 22 531"><path d="M11 .5L21.5 22H17.5V530.5H4.5V22H.5Z" fill="#efefef" stroke="#000"/></svg>
        <div class="yl">${ylab.map(t=>`<div>${t}</div>`).join("")}</div>
        <div class="m">${cellsHtml}</div>
      </div>
      <div class="tk">${["0%","20.0%","40.0%","60.0%","80.0%","100.0%"].map(t=>`<div>${t}</div>`).join("")}</div>
      <div class="nm">${["Negligible","Minor","Moderate","Serious","Critical"].map(t=>`<div>${t}</div>`).join("")}</div>
      <svg class="ia" width="930" height="24" viewBox="0 0 930 24"><path d="M.5 5.5H906.5V.5L928.5 12L906.5 23.5V18.5H.5Z" fill="#efefef" stroke="#000"/></svg>
      <div class="it">Impact</div>
      <svg class="link" width="1020" height="628"><line x1="${1134-578}" y1="${394-179}" x2="${862-578}" y2="${472-179}" stroke="#000" stroke-width="2"/><path d="M${856-578} ${474-179}L${872-578} ${463-179}L${875-578} ${473-179}Z" fill="#000"/><circle cx="${856-578}" cy="${474-179}" r="3.5" fill="#fff" stroke="#000"/></svg>
      <rp-pin dot="1134" y="394" end="1272">1: Delay in Financing</rp-pin>
      <rp-pin dot="850" y="226" end="1024">2: Not enought information...</rp-pin>
      <rp-pin dot="1440" y="633" end="1590">3: Other risks, related...</rp-pin>
      <rp-pin dot="1067" y="686" end="1185">4: Staff turnover</rp-pin>
      <rp-pin dot="652" y="446" end="817">5: Cost information is not...</rp-pin>
      <rp-pin dot="651" y="288" end="809">6: Delay in getting level...</rp-pin>
    </div>
    <div class="bot">${bottom.map((t,i)=>`<rp-radio w="159"${i?"":" checked"}>${t}</rp-radio>`).join("")}</div>`;
  }
}
customElements.define("rp-matrix",RpMatrix);

class RpStatus extends RpEl {
  render(){
    const c=(t,w,g)=>`<div class="c${g?" g":""}" style="width:${w}px">${t}</div>`;
    return `<style>
    :host{display:flex;height:19px;flex:none;background:#f0eded;box-sizing:border-box;border-top:1px solid #fff;box-shadow:0 -1px 0 #a0a0a0;align-items:center}
    .l{flex:1;padding:2px 0 0 4px}
    .c{box-sizing:border-box;height:18px;line-height:20px;border-left:1px solid #d8d4d4;padding-left:3px;white-space:nowrap;flex:none;overflow:visible}
    .g{color:#8a8f9a;padding-left:2px;font-size:10.5px}
    </style>
    <div class="l">Ready</div>
    ${c("",7)}${c("Risk Matrix",85)}${c("",60)}${c("CAP",27,1)}${c("NUM",32,1)}${c("SCRL",31,1)}${c("Sat, Feb 20,2016",88)}${c("8:02:26 PM",62)}`;
  }
}
customElements.define("rp-status",RpStatus);

class RpApp extends RpEl {
  render(){ return `<style>
  :host{display:flex;flex-direction:column;width:1600px;height:860px;overflow:hidden}
  .main{flex:1;display:flex;min-height:0;background:#ececec;padding-top:3px;padding-bottom:2px;box-sizing:border-box}
  .gap1{width:3px;flex:none}.gap2{width:3px;flex:none}
  rp-workflow{margin-top:-3px;margin-bottom:-2px;padding-bottom:2px}
  </style>
  <rp-titlebar></rp-titlebar>
  <rp-menubar></rp-menubar>
  <rp-ribbon></rp-ribbon>
  <div class="main">
    <rp-workflow></rp-workflow>
    <div class="gap1"></div>
    <rp-risk-grid></rp-risk-grid>
    <div class="gap2"></div>
    <rp-matrix></rp-matrix>
  </div>
  <rp-status></rp-status>`; }
}
customElements.define("rp-app",RpApp);
</script>
</body>
</html>
